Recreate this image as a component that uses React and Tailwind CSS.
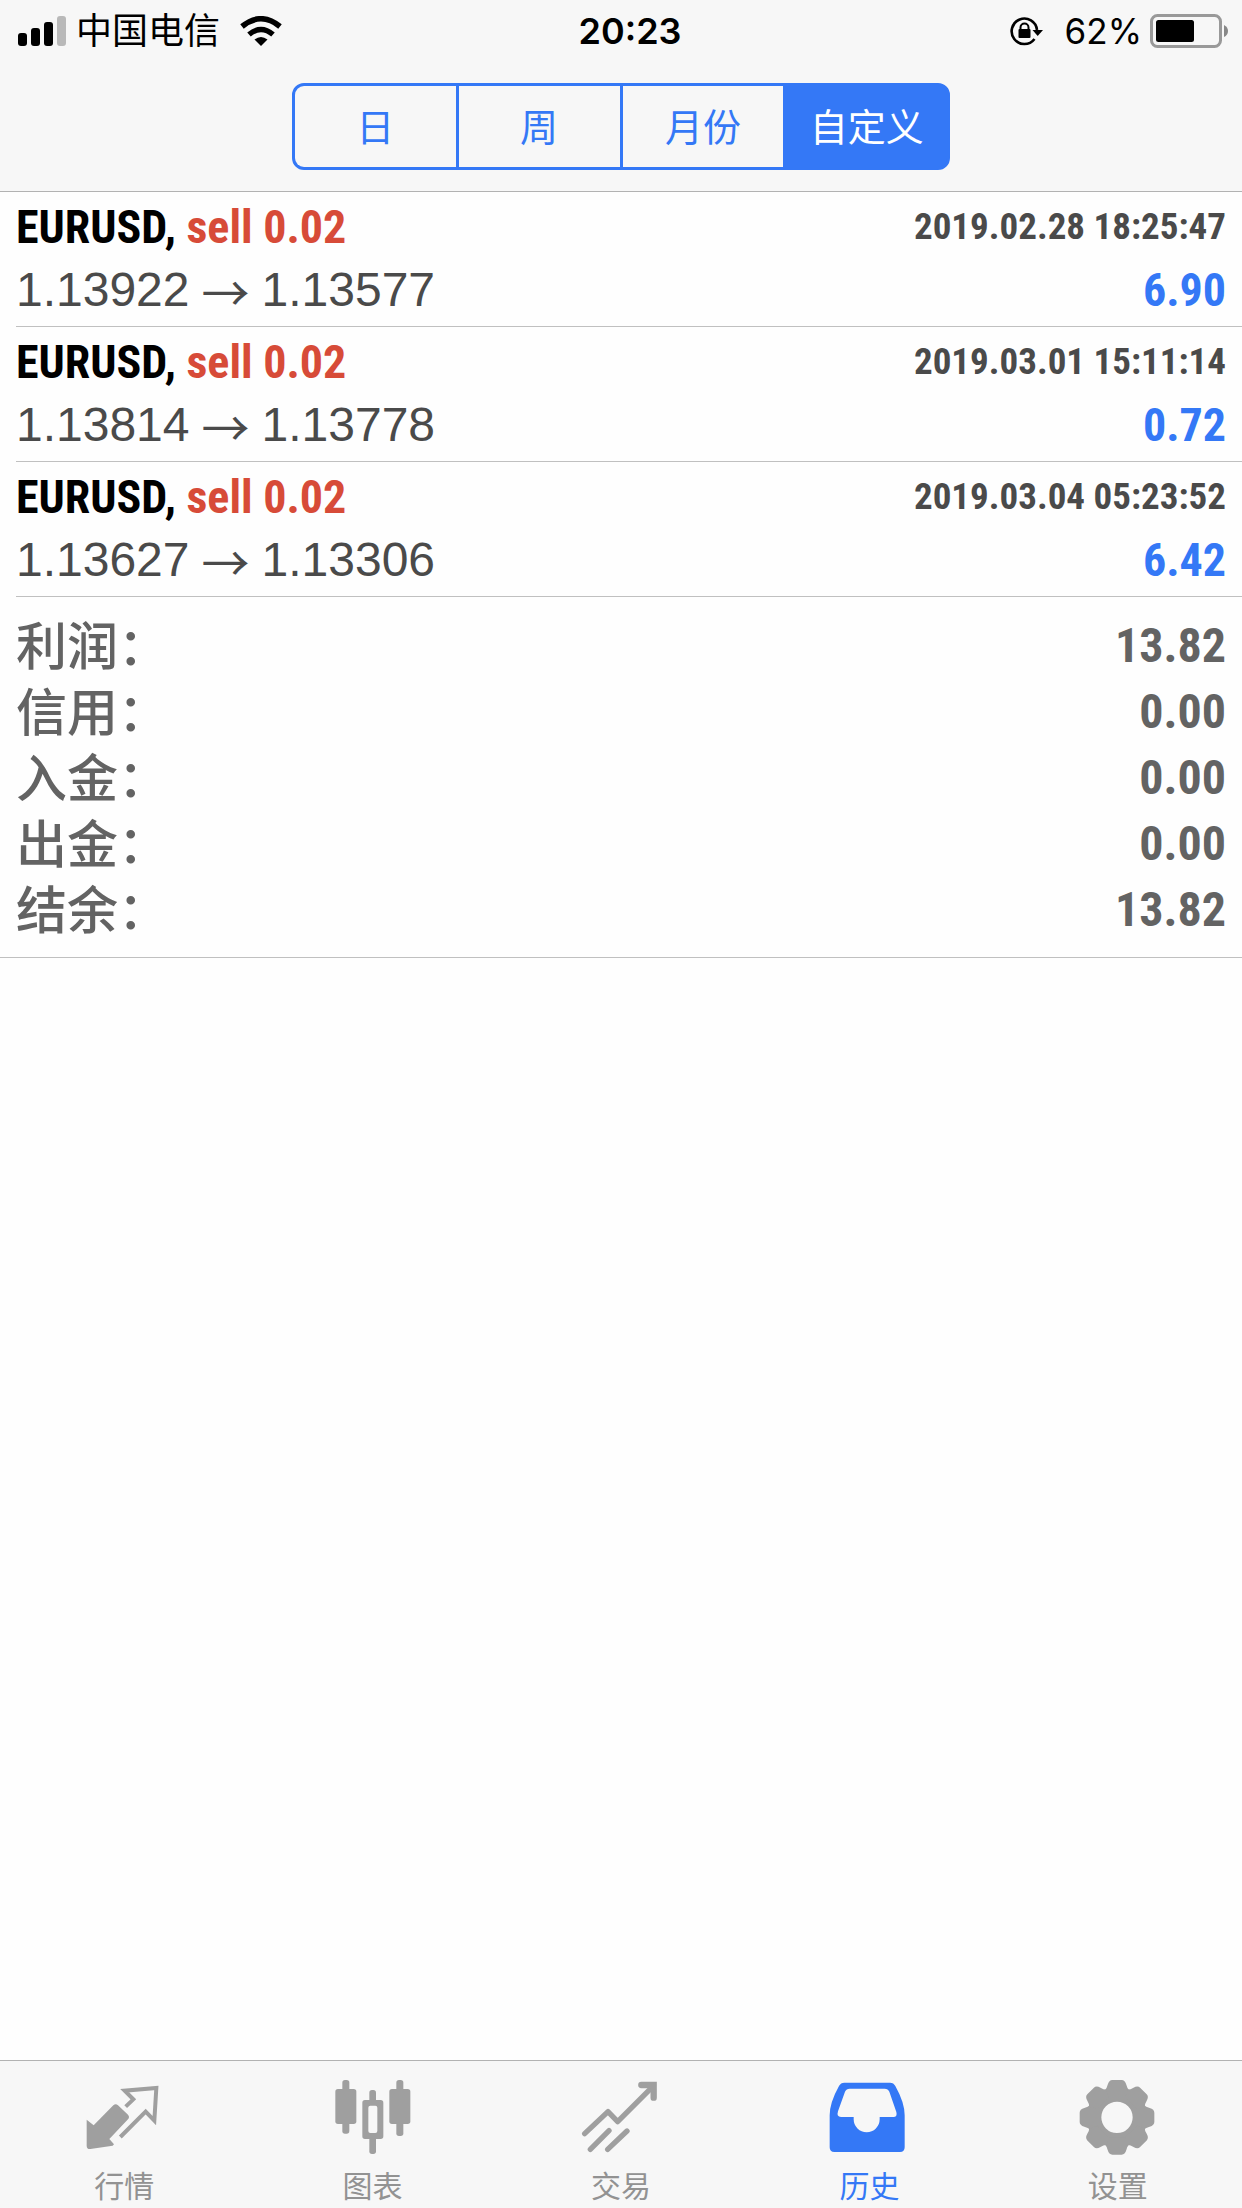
import { useState } from 'react';
import clsx from 'clsx';

const periods = ['日', '周', '月份', '自定义'];

const deals = [
  { symbol: 'EURUSD', type: 'sell', volume: '0.02', open: '1.13922', close: '1.13577', time: '2019.02.28 18:25:47', profit: '6.90' },
  { symbol: 'EURUSD', type: 'sell', volume: '0.02', open: '1.13814', close: '1.13778', time: '2019.03.01 15:11:14', profit: '0.72' },
  { symbol: 'EURUSD', type: 'sell', volume: '0.02', open: '1.13627', close: '1.13306', time: '2019.03.04 05:23:52', profit: '6.42' },
];

const summary = [
  { label: '利润：', value: '13.82' },
  { label: '信用：', value: '0.00' },
  { label: '入金：', value: '0.00' },
  { label: '出金：', value: '0.00' },
  { label: '结余：', value: '13.82' },
];

function QuotesIcon() {
  return (
    <svg viewBox="127 84 252 252" className="size-[84px]" fill="currentColor">
      <path d="M141 209 L162 226 L221 166 Q228 159 235 166 L265 194 Q271 201 265 208 L209 267 L223 283 L219 287 L152 297 Q141 298 141 287Z" />
      <path d="M258 170 L281 148 L255 122 L350 114 L344 212 L318 185 L242 261" fill="none" stroke="currentColor" strokeWidth="12" />
    </svg>
  );
}

function ChartIcon() {
  return (
    <svg viewBox="872 84 252 252" className="size-[84px]" fill="currentColor">
      <rect x="885" y="117" width="63" height="105" rx="8" />
      <rect x="906" y="90" width="21" height="161" rx="8" />
      <rect x="1047" y="117" width="63" height="105" rx="8" />
      <rect x="1068" y="90" width="21" height="168" rx="8" />
      <rect x="987" y="120" width="20" height="40" rx="8" />
      <rect x="987" y="258" width="20" height="54" rx="8" />
      <path fillRule="evenodd" d="M974 150H1021Q1029 150 1029 158V259Q1029 267 1021 267H974Q966 267 966 259V158Q966 150 974 150Z M990 167Q984 167 984 173V243Q984 249 990 249H1005Q1011 249 1011 243V173Q1011 167 1005 167Z" />
    </svg>
  );
}

function TradeIcon() {
  return (
    <svg viewBox="117 84 252 252" className="size-[84px]" fill="none" stroke="currentColor">
      <g strokeWidth="16" strokeLinecap="round" strokeLinejoin="round">
        <path d="M134 251 L204 185 L233 215 L338 110" />
        <path d="M151 298 L207 242 M203 298 L261 243" />
      </g>
      <path d="M304 105 H341 V143" strokeWidth="19" strokeLinecap="round" />
    </svg>
  );
}

function HistoryIcon() {
  return (
    <svg viewBox="862 84 252 252" className="size-[84px]" fill="currentColor">
      <path
        fillRule="evenodd"
        d="M914 98H1051Q1062 98 1067 108Q1095 158 1095 196V292Q1095 306 1081 306H884Q870 306 870 292V196Q870 158 898 108Q903 98 914 98Z M930 116Q920 116 916 125L895 184Q890 201 904 201H942V208A39 39 0 0 0 1020 208V201H1061Q1074 201 1070 186L1049 125Q1045 116 1035 116Z"
      />
    </svg>
  );
}

function SettingsIcon() {
  return (
    <svg viewBox="-123 -118 252 252" className="size-[84px]" fill="currentColor">
      <circle r="68" fill="none" stroke="currentColor" strokeWidth="42" />
      {[0, 45, 90, 135, 180, 225, 270, 315].map((angle) => (
        <path
          key={angle}
          transform={`rotate(${angle})`}
          d="M-36 -82Q-31 -86 -28 -98Q-24 -112 -14 -112H14Q24 -112 28 -98Q31 -86 36 -82L25 -60H-25Z"
        />
      ))}
    </svg>
  );
}

const tabs = [
  { label: '行情', Icon: QuotesIcon },
  { label: '图表', Icon: ChartIcon },
  { label: '交易', Icon: TradeIcon },
  { label: '历史', Icon: HistoryIcon },
  { label: '设置', Icon: SettingsIcon },
];

function StatusBar() {
  return (
    <div className="grid grid-cols-3 items-center h-[62px] pl-[18px] text-[36px] font-['Inter','Noto_Sans_CJK_SC',sans-serif] text-black">
      <div className="flex items-center">
        <svg viewBox="0 0 48 30" className="w-12 h-[30px]">
          <rect x="0" y="17" width="9" height="13" rx="3" />
          <rect x="13" y="12" width="9" height="18" rx="3" />
          <rect x="26" y="6" width="9" height="24" rx="3" />
          <rect x="39" y="0" width="9" height="30" rx="3" fill="#b9b9b9" />
        </svg>
        <span className="ml-[10px]">中国电信</span>
        <svg viewBox="0 0 42 30" className="ml-[20px] w-[42px] h-[30px]">
          <path d="M2 10.500Q21 -5 40 10.500" fill="none" stroke="#000" strokeWidth="5.500" />
          <path d="M9 18.500Q21 8.500 33 18.500" fill="none" stroke="#000" strokeWidth="5.500" />
          <path d="M21 30L14.500 23.500Q21 18.500 27.500 23.500Z" />
        </svg>
      </div>
      <div className="text-center font-semibold">20:23</div>
      <div className="flex items-center justify-end pr-3">
        <svg viewBox="0 0 36 30" className="w-9 h-[30px]">
          <path d="M25.500 23A12.700 12.700 0 1 1 28 14" fill="none" stroke="#000" strokeWidth="2.600" />
          <path d="M23.500 14H34L28.700 20Z" />
          <rect x="9.500" y="13" width="12" height="9" rx="1" />
          <path d="M11.500 14V11.500A4 4 0 0 1 19.500 11.500V14" fill="none" stroke="#000" strokeWidth="2" />
        </svg>
        <span className="ml-5 text-[35px]">62%</span>
        <svg viewBox="0 0 80 34" className="ml-2 w-20 h-[34px]">
          <rect x="1.500" y="1.500" width="69" height="31" rx="6" fill="none" stroke="#999" strokeWidth="3" />
          <rect x="6" y="6" width="38" height="22" rx="2.500" />
          <path d="M74 11Q78 13 78 17T74 23Z" fill="#888" />
        </svg>
      </div>
    </div>
  );
}

export default function App() {
  const [period, setPeriod] = useState('自定义');
  const [tab, setTab] = useState('历史');

  return (
    <div className="flex flex-col min-h-screen bg-[#fefefe] font-['Liberation_Sans','Noto_Sans_CJK_SC',sans-serif]">
      <header className="bg-[#f7f7f7] border-b border-[#b2b2b2] pb-[21px]">
        <StatusBar />
        <div className="flex w-[53%] mx-auto mt-[21px] h-[87px] rounded-xl border-3 border-[#3478f6] bg-[#3478f6] gap-[3px] overflow-hidden">
          {periods.map((item) => (
            <button
              key={item}
              type="button"
              onClick={() => setPeriod(item)}
              className={clsx(
                'flex-1 text-[38px] pt-1',
                period === item ? 'bg-[#3478f6] text-white' : 'bg-[#f7f7f7] text-[#3478f6]'
              )}
            >
              {item}
            </button>
          ))}
        </div>
      </header>

      <main className="grow">
        <ul>
          {deals.map((deal) => (
            <li key={deal.time} className="ml-4 pr-4 pt-1 h-[135px] border-b border-[#c0c0c0]">
              <div className="flex items-center justify-between h-[62px] font-bold font-['Roboto_Condensed','Liberation_Sans',sans-serif]">
                <span className="text-[46px] text-black">
                  {deal.symbol}, <span className="text-[#d74b38]">{deal.type} {deal.volume}</span>
                </span>
                <time className="text-[37px] text-[#4a4a4a]">{deal.time}</time>
              </div>
              <div className="flex items-center justify-between h-[64px] text-[48px]">
                <span className="flex items-center gap-3 text-[#4a4a4a]">
                  {deal.open}
                  <span className="leading-[64px] font-['Noto_Sans_CJK_SC',sans-serif]">→</span>
                  {deal.close}
                </span>
                <span className="text-[46px] font-bold font-['Roboto_Condensed','Liberation_Sans',sans-serif] text-[#3478f6]">{deal.profit}</span>
              </div>
            </li>
          ))}
        </ul>

        <dl className="px-4 pt-4 pb-[14px] border-b border-[#c0c0c0]">
          {summary.map((row) => (
            <div key={row.label} className="flex items-center justify-between h-[66px] text-[#636363]">
              <dt className="pt-1 text-[51px] leading-[60px] font-medium">{row.label}</dt>
              <dd className="text-[48px] font-bold font-['Roboto_Condensed','Liberation_Sans',sans-serif]">{row.value}</dd>
            </div>
          ))}
        </dl>
      </main>

      <nav className="flex bg-[#f7f7f7] border-t border-[#b2b2b2] pt-[17px]">
        {tabs.map(({ label, Icon }) => (
          <button
            key={label}
            type="button"
            onClick={() => setTab(label)}
            className={clsx('flex-1 flex flex-col items-center', tab === label ? 'text-[#3478f6]' : 'text-[#9f9f9f]')}
          >
            <Icon />
            <span className={clsx('pt-1 text-[30px] leading-[42px]', tab !== label && 'text-[#929292]')}>{label}</span>
          </button>
        ))}
      </nav>
    </div>
  );
}
